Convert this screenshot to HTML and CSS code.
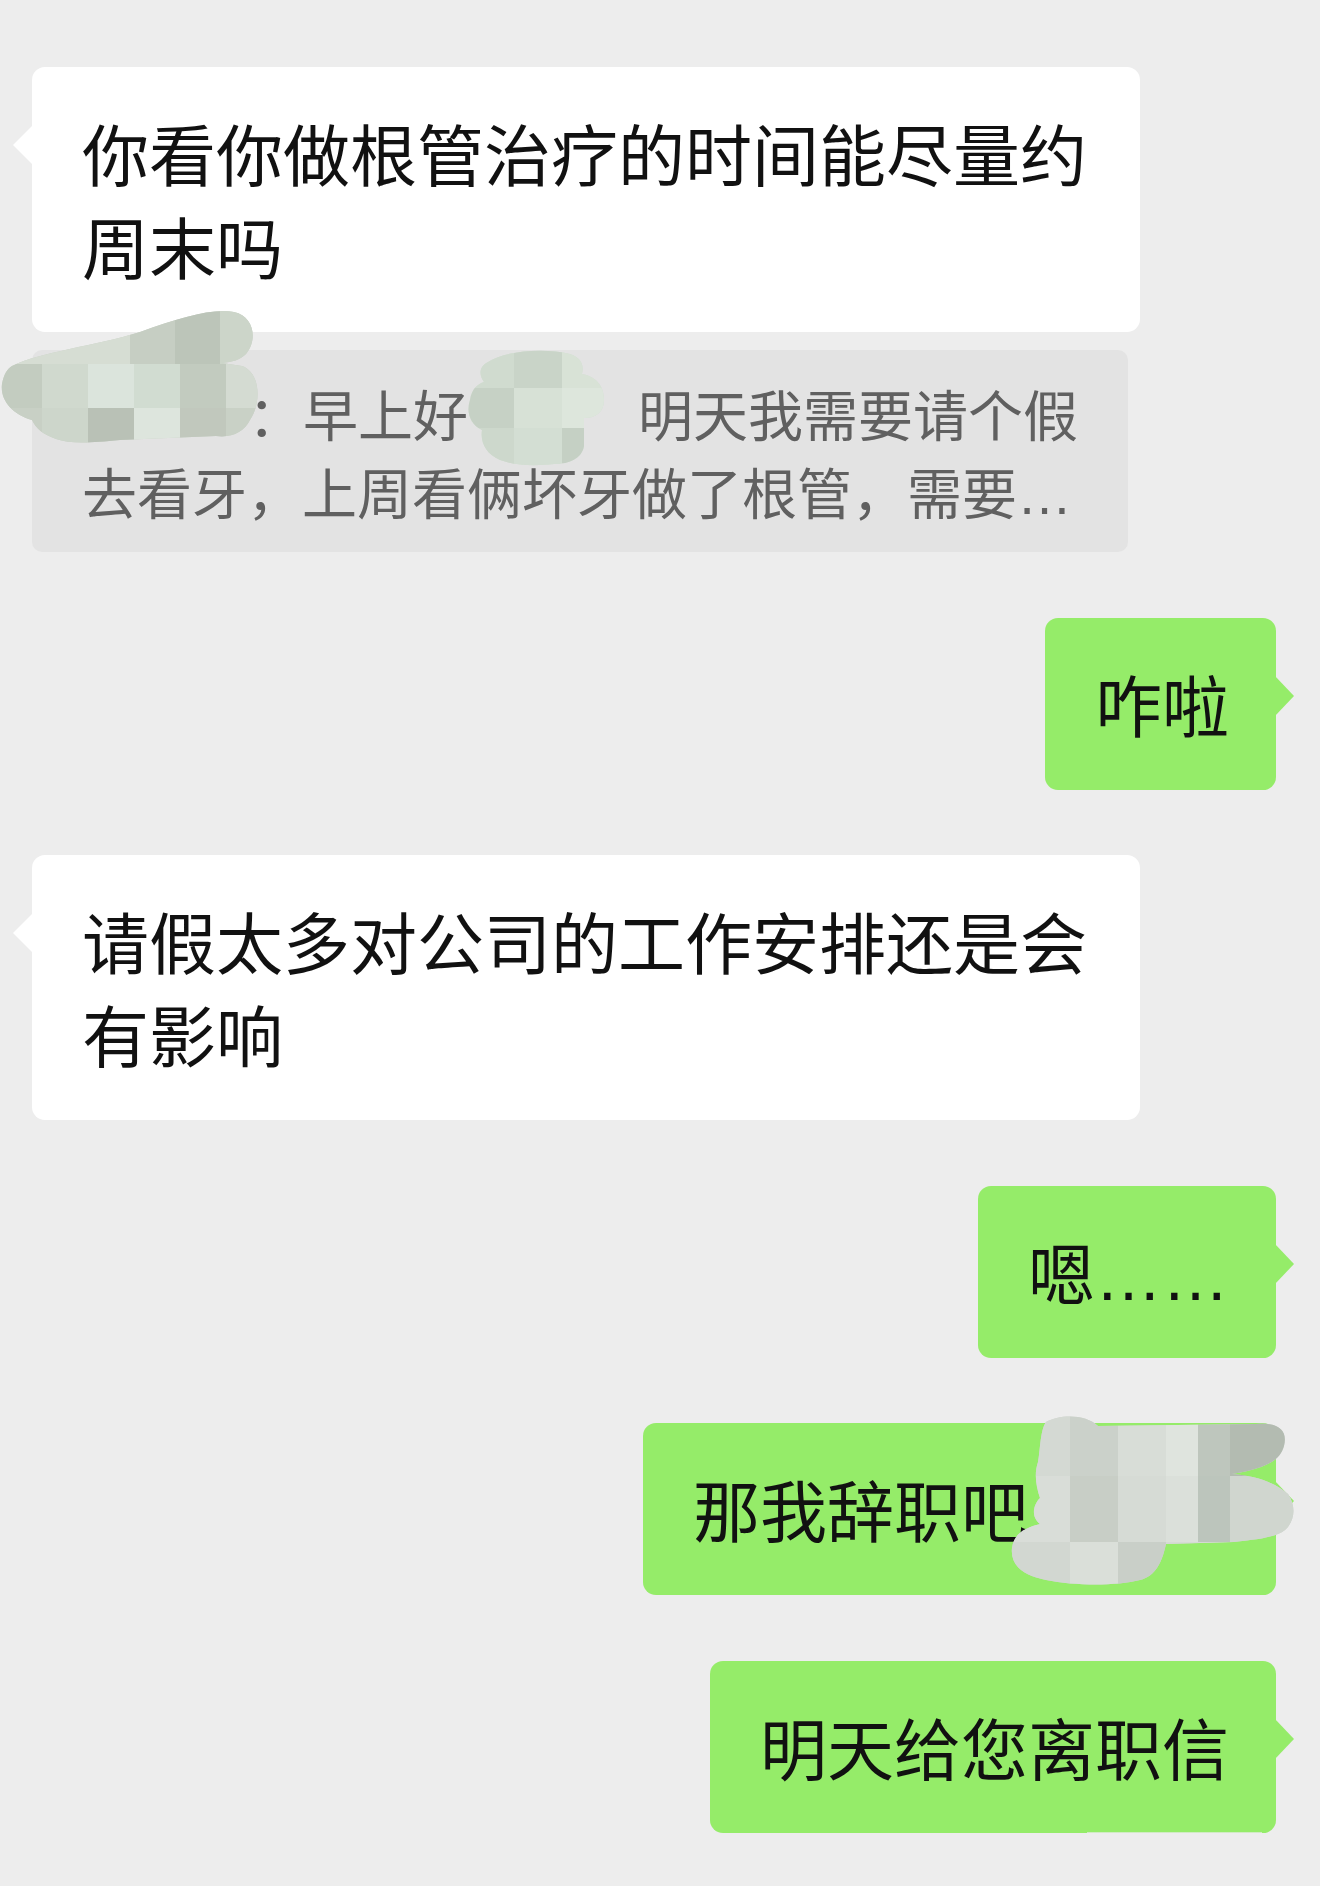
FILE: index.html
```html
<!DOCTYPE html>
<html lang="zh-CN">
<head>
    <meta charset="UTF-8">
    <meta name="viewport" content="width=device-width, initial-scale=1.0">
    <title>聊天记录</title>
    <link rel="stylesheet" href="styles.css">
</head>
<body>
    <div class="chat">
        <div class="group">
            <div class="bubble white">你看你做根管治疗的时间能尽量约周末吗</div>
            <div class="quote">
                <div class="qline"><span class="gap g1"></span>：早上好<span class="gap g2"></span>明天我需要请个假</div>
                <div class="qline">去看牙，上周看俩坏牙做了根管，需要<span class="dots">…</span></div>
            </div>
        </div>

        <div class="row"><div class="bubble green">咋啦</div></div>

        <div class="group">
            <div class="bubble white">请假太多对公司的工作安排还是会有影响</div>
        </div>

        <div class="row"><div class="bubble green">嗯<span class="dots">……</span></div></div>

        <div class="row"><div class="bubble green wide">那我辞职吧</div></div>

        <div class="row"><div class="bubble green">明天给您离职信</div></div>

        <!-- mosaic patches that hide names -->
        <svg class="mosaic m1" width="262" height="140" viewBox="0 0 262 140">
            <defs>
                <clipPath id="c1">
                    <path d="M12 58 C40 44 95 38 140 24 C180 10 212 0 234 4 C254 8 258 32 246 46 C240 52 232 54 222 55 L242 58 C260 64 262 94 250 112 C244 124 232 130 216 128 L120 132 C90 135 70 136 56 131 C42 126 36 120 32 112 C12 106 0 92 2 76 C4 66 7 61 12 58 Z"/>
                </clipPath>
            </defs>
            <g clip-path="url(#c1)">
                <rect x="0" y="0" width="262" height="140" fill="#c9d1c6"/>
                <rect x="0" y="0" width="130" height="56" fill="#d6ddd3"/>
                <rect x="130" y="0" width="45" height="56" fill="#c6cec3"/>
                <rect x="175" y="0" width="45" height="56" fill="#bcc5b9"/>
                <rect x="220" y="0" width="42" height="56" fill="#ccd5c9"/>
                <rect x="0" y="56" width="42" height="44" fill="#c3ccc0"/>
                <rect x="42" y="56" width="46" height="44" fill="#d0d9ce"/>
                <rect x="88" y="56" width="46" height="44" fill="#dbe4dc"/>
                <rect x="134" y="56" width="46" height="44" fill="#d1dcd1"/>
                <rect x="180" y="56" width="46" height="44" fill="#c2cbbf"/>
                <rect x="226" y="56" width="36" height="44" fill="#d4dbd2"/>
                <rect x="0" y="100" width="42" height="40" fill="#c8d0c5"/>
                <rect x="42" y="100" width="46" height="40" fill="#cdd6cb"/>
                <rect x="88" y="100" width="46" height="40" fill="#b9c1b6"/>
                <rect x="134" y="100" width="46" height="40" fill="#dde5dd"/>
                <rect x="180" y="100" width="46" height="40" fill="#c1c8bd"/>
                <rect x="226" y="100" width="36" height="40" fill="#c9d1c6"/>
            </g>
        </svg>

        <svg class="mosaic m2" width="140" height="118" viewBox="0 0 140 118">
            <defs>
                <clipPath id="c2">
                    <path d="M22 14 C40 2 80 0 104 6 C116 10 118 18 116 26 C128 28 138 36 138 52 C138 64 130 70 118 70 L118 98 C116 110 104 116 88 116 C70 118 50 118 34 112 C20 106 14 94 16 82 C4 76 0 64 4 52 C6 40 12 36 18 34 C12 26 14 18 22 14 Z"/>
                </clipPath>
            </defs>
            <g clip-path="url(#c2)">
                <rect x="0" y="0" width="140" height="118" fill="#d3ded2"/>
                <rect x="0" y="0" width="48" height="40" fill="#d0dbcf"/>
                <rect x="48" y="0" width="48" height="40" fill="#c9d4c8"/>
                <rect x="96" y="0" width="44" height="40" fill="#d8e2d6"/>
                <rect x="0" y="40" width="48" height="40" fill="#c6d1c5"/>
                <rect x="48" y="40" width="48" height="40" fill="#d7e1d6"/>
                <rect x="96" y="40" width="44" height="40" fill="#dde6dc"/>
                <rect x="0" y="80" width="48" height="38" fill="#cdd8cc"/>
                <rect x="48" y="80" width="48" height="38" fill="#d3ded3"/>
                <rect x="96" y="80" width="44" height="38" fill="#c5d0c4"/>
            </g>
        </svg>

        <svg class="mosaic m3" width="290" height="172" viewBox="0 0 290 172">
            <defs>
                <clipPath id="c3">
                    <path d="M40 6 C54 -2 80 -2 92 10 L250 8 C272 6 282 14 278 30 C274 44 262 52 226 58 C250 60 268 66 282 78 C292 92 288 112 272 118 C256 124 240 124 228 126 L160 128 C156 146 150 160 134 164 C110 170 70 170 40 164 C18 160 4 150 6 132 C8 118 18 112 34 108 C24 100 28 88 34 82 C30 70 28 58 32 46 C34 38 34 14 40 6 Z"/>
                </clipPath>
            </defs>
            <g clip-path="url(#c3)">
                <rect x="0" y="0" width="290" height="172" fill="#cfd5ce"/>
                <rect x="0" y="0" width="64" height="60" fill="#d4d9d3"/>
                <rect x="64" y="0" width="48" height="60" fill="#cbd1ca"/>
                <rect x="112" y="0" width="48" height="60" fill="#d8ddd7"/>
                <rect x="160" y="0" width="32" height="60" fill="#dfe4de"/>
                <rect x="192" y="0" width="32" height="60" fill="#bec6bd"/>
                <rect x="224" y="0" width="66" height="60" fill="#b3bbb1"/>
                <rect x="0" y="60" width="64" height="66" fill="#d9ddd8"/>
                <rect x="64" y="60" width="48" height="66" fill="#c8cec6"/>
                <rect x="112" y="60" width="48" height="66" fill="#d6dbd5"/>
                <rect x="160" y="60" width="32" height="66" fill="#dbe0da"/>
                <rect x="192" y="60" width="32" height="66" fill="#bcc5bc"/>
                <rect x="224" y="60" width="66" height="66" fill="#d0d6cf"/>
                <rect x="0" y="126" width="64" height="46" fill="#d2d7d1"/>
                <rect x="64" y="126" width="48" height="46" fill="#dadfd9"/>
                <rect x="112" y="126" width="48" height="46" fill="#c9cfc8"/>
                <rect x="160" y="126" width="130" height="46" fill="#d5dad4"/>
            </g>
        </svg>

        <div class="fade"></div>
    </div>
</body>
</html>
```

FILE: styles.css
```css
body {
    margin: 0;
    background-color: #ededed;
    font-family: "Noto Sans CJK SC", "Noto Sans", sans-serif;
}
.chat {
    position: relative;
    display: flex;
    flex-direction: column;
    gap: 65.5px;
    padding: 67px 44px 0 32px;
}
.group {
    display: flex;
    flex-direction: column;
    align-items: flex-start;
    gap: 18px;
}
.row {
    display: flex;
    justify-content: flex-end;
}
.bubble {
    position: relative;
    box-sizing: border-box;
    padding: 38px 47px 41px 50px;
    border-radius: 13px;
    font-size: 67px;
    line-height: 93px;
    color: #111;
}
.bubble::before {
    content: '';
    position: absolute;
    top: 58px;
    border-top: 20px solid transparent;
    border-bottom: 20px solid transparent;
}
.white {
    width: 1108px;
    background-color: #fff;
}
.white::before {
    left: -19px;
    border-right: 20px solid #fff;
}
.green {
    background-color: #95ec69;
}
.green::before {
    right: -18px;
    border-left: 19px solid #95ec69;
}
.wide {
    width: 633px;
}
.dots {
    font-family: "Liberation Sans", sans-serif;
    line-height: 0;
}
.quote {
    box-sizing: border-box;
    width: 1096px;
    padding: 23px 40px 23px 50px;
    border-radius: 10px;
    background-color: #e3e3e3;
    color: #606060;
    font-size: 55px;
    line-height: 78px;
}
.qline {
    height: 78px;
    white-space: nowrap;
}
.gap {
    display: inline-block;
}
.g1 {
    width: 166px;
}
.g2 {
    width: 170px;
}
.mosaic {
    position: absolute;
}
.m1 {
    left: 0;
    top: 308px;
}
.m2 {
    left: 466px;
    top: 348px;
}
.m3 {
    left: 1006px;
    top: 1416px;
}
.fade {
    position: absolute;
    left: 1087px;
    top: 1832px;
    width: 175px;
    height: 34px;
    background: linear-gradient(to bottom, #d2ebc6, rgba(237, 237, 237, 0));
}
```
